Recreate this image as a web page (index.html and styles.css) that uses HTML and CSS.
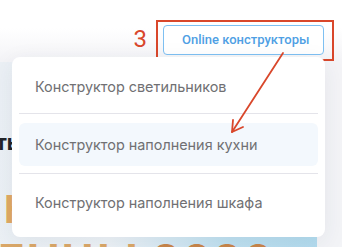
FILE: index.html
```html
<!DOCTYPE html>
<html lang="ru">
<head>
<meta charset="utf-8">
<link rel="stylesheet" href="styles.css">
</head>
<body>
<div class="viewport">
  <header class="header">
    <span class="step">3</span>
    <div class="mark">
      <button class="btn">Online конструкторы</button>
    </div>
  </header>
  <section class="banner">
    <div class="banner-title">ть</div>
    <div class="banner-big">Н</div>
    <div class="banner-bottom"><span class="tan">ЕНЦЫ</span> <span class="copper">2026</span></div>
  </section>

  <nav class="menu">
    <a class="item">Конструктор светильников</a>
    <div class="sep sep-a"></div>
    <a class="item item-hover">Конструктор наполнения кухни</a>
    <div class="sep sep-b"></div>
    <a class="item">Конструктор наполнения шкафа</a>
  </nav>

  <svg class="arrow" width="342" height="247" viewBox="0 0 342 247">
    <g fill="none" stroke="#d9472b" stroke-width="1.8" stroke-linecap="round" stroke-linejoin="round">
      <path d="M283 53 L232 132"/>
      <path d="M243 127 L232 132 L233 120"/>
    </g>
  </svg>
</div>
</body>
</html>
```

FILE: styles.css
```css
* { box-sizing: border-box; }
html, body { margin: 0; padding: 0; }
body {
  width: 342px;
  height: 247px;
  overflow: hidden;
  background: linear-gradient(180deg, #ffffff 0, #ffffff 28px, #f4f4f7 60px, #f3f4f7 100%);
  font-family: "Inter", "Noto Sans", sans-serif;
}
.viewport {
  position: relative;
  width: 342px;
  height: 247px;
  overflow: hidden;
}
.header {
  display: flex;
  justify-content: flex-end;
  align-items: center;
  padding: 18px 8px 0 0;
  height: 62px;
}
.step {
  font-family: "Roboto", "Liberation Sans", sans-serif;
  font-size: 24px;
  line-height: 24px;
  color: #d9472b;
  margin-right: 9px;
  margin-top: -2px;
}
.mark {
  border: 2px solid #d9472b;
  padding: 3px 8px 4px 5px;
}
.btn {
  display: block;
  font-family: "Roboto", "Liberation Sans", sans-serif;
  font-weight: 500;
  font-size: 13px;
  color: #4f9fe4;
  background: #ffffff;
  border: 1px solid #7ec0f2;
  border-radius: 4px;
  height: 30px;
  padding: 0 18px;
  line-height: 28px;
  width: 161px;
  white-space: nowrap;
}
.banner {
  width: 317px;
  height: 185px;
  background: linear-gradient(100deg, #ebf0f5 0%, #eef3f7 40%, #bfe1f1 75%, #b3dcef 100%);
  overflow: hidden;
}
.banner-title {
  font-family: "Inter", "Noto Sans", sans-serif;
  font-weight: 700;
  font-size: 21px;
  line-height: 24px;
  color: #222428;
  margin: 69px 0 0 -4px;
}
.banner-big {
  font-family: "Inter", "Noto Sans", sans-serif;
  font-weight: 700;
  font-size: 38px;
  line-height: 38px;
  color: #e1aa63;
  margin: 35px 0 0 4px;
}
.banner-bottom {
  font-family: "Inter", "Noto Sans", sans-serif;
  font-weight: 700;
  font-size: 44px;
  line-height: 44px;
  margin: 10px 0 0 -2px;
  white-space: nowrap;
  letter-spacing: 2px;
}
.tan { color: #dba868; }
.copper { color: #c9864a; }

.menu {
  position: absolute;
  left: 12px;
  top: 57px;
  width: 313px;
  height: 180px;
  background: #ffffff;
  border-radius: 8px;
  box-shadow: 0 6px 24px rgba(40, 50, 80, 0.08);
  padding: 8px 7px 13px;
  display: flex;
  flex-direction: column;
}
.item {
  display: flex;
  align-items: center;
  height: 43px;
  padding: 0 16px;
  font-size: 14.4px;
  color: #707073;
  border-radius: 6px;
  flex: none;
}
.item-hover { background: #f3f8fd; }
.sep {
  height: 1px;
  background: #e4e4ea;
  flex: none;
}
.sep-a { margin: 5px 0 9px; }
.sep-b { margin: 7px 0 7px; }
.arrow {
  position: absolute;
  left: 0;
  top: 0;
  pointer-events: none;
}
```
